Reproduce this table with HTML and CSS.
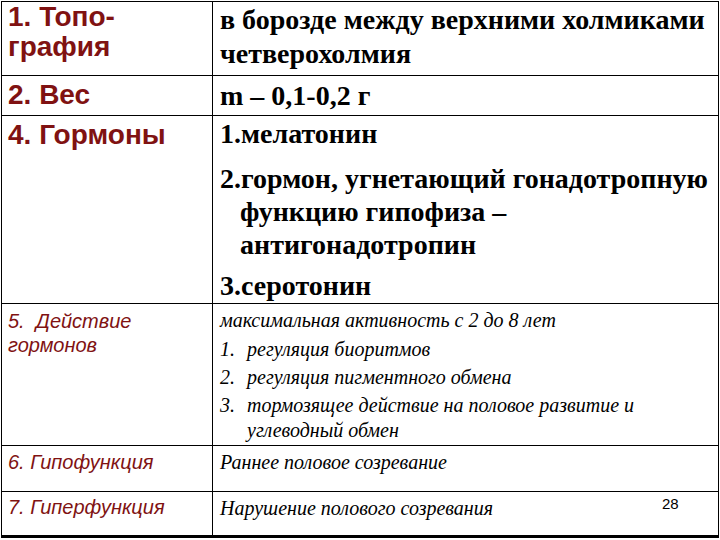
FILE: index.html
```html
<!DOCTYPE html>
<html lang="ru">
<head>
<meta charset="utf-8">
<title>Эпифиз</title>
<link rel="stylesheet" href="styles.css">
</head>
<body>
<div class="slide">
  <div class="grid">
    <div class="cell lbl big r1">1. Топо-<br>графия</div>
    <div class="cell val big r1">в борозде между верхними холмиками четверохолмия</div>

    <div class="cell lbl big r2">2. Вес</div>
    <div class="cell val big r2">m – 0,1-0,2 г</div>

    <div class="cell lbl big r3">4. Гормоны</div>
    <div class="cell val big r3">
      <p class="par p1">1.мелатонин</p>
      <p class="par p2 hang">2.гормон, угнетающий гонадотропную функцию гипофиза –<br>антигонадотропин</p>
      <p class="par p3">3.серотонин</p>
    </div>

    <div class="cell lbl small r4">5.&nbsp; Действие<br>гормонов</div>
    <div class="cell val it r4">
      <div class="line">максимальная активность с 2 до 8 лет</div>
      <ol class="list">
        <li><span class="num">1.</span><span class="txt">регуляция биоритмов</span></li>
        <li><span class="num">2.</span><span class="txt">регуляция пигментного обмена</span></li>
        <li><span class="num">3.</span><span class="txt">тормозящее действие на половое развитие и<br>углеводный обмен</span></li>
      </ol>
    </div>

    <div class="cell lbl small r5">6. Гипофункция</div>
    <div class="cell val it r5">Раннее половое созревание</div>

    <div class="cell lbl small r6">7. Гиперфункция</div>
    <div class="cell val it r6">Нарушение полового созревания</div>
  </div>
  <div class="pagenum">28</div>
</div>
</body>
</html>
```
FILE: styles.css
```css
html, body {
  margin: 0;
  padding: 0;
  background: #ffffff;
}
.slide {
  position: relative;
  width: 720px;
  height: 540px;
  overflow: hidden;
}
.grid {
  margin: 1px 0 0 1px;
  width: 718px;
  box-sizing: border-box;
  display: grid;
  grid-template-columns: 210px 505px;
  grid-template-rows: 73px 39px 187px 141px 45px 43px;
  gap: 1px;
  padding: 1px 1px 3px 1px;
  background: #000;
}
.cell {
  background: #fff;
  overflow: hidden;
}
.lbl {
  padding-left: 6px;
  color: #801212;
  font-family: "Liberation Sans", Arial, sans-serif;
}
.val {
  padding-left: 7px;
  padding-right: 2px;
  color: #000;
  font-family: "Liberation Serif", "Times New Roman", serif;
}

.lbl.big {
  font-size: 28px;
  font-weight: bold;
  line-height: 30px;
  padding-top: 0;
}
.val.big {
  font-size: 28px;
  font-weight: bold;
  line-height: 34px;
  padding-top: 1px;
}
.lbl.big.r2 {
  padding-top: 4px;
}
.val.big.r2 {
  padding-top: 3px;
}
.lbl.big.r3 {
  padding-top: 4px;
}
.val.big.r3 {
  padding-top: 1px;
}
.par {
  margin: 0;
  line-height: 33px;
}
.p1 { margin-bottom: 12px; }
.p2 { margin-bottom: 8px; }
.hang {
  padding-left: 20px;
  text-indent: -20px;
}
.lbl.small {
  font-size: 20px;
  font-style: italic;
  line-height: 24px;
  padding-top: 5px;
}
.val.it {
  font-size: 20px;
  font-style: italic;
  line-height: 25px;
  padding-top: 4px;
}
.lbl.small.r5 { padding-top: 4px; }
.val.it.r5 { padding-top: 4px; }
.lbl.small.r6 { padding-top: 3px; }
.val.it.r6 { padding-top: 4px; }
.line {
  margin-bottom: 4px;
}
.list {
  list-style: none;
  margin: 0;
  padding: 0;
}
.list li {
  display: flex;
  margin-bottom: 3px;
}
.list .num {
  width: 27px;
  flex: none;
}
.list .txt {
  flex: 1;
}
.pagenum {
  position: absolute;
  left: 662px;
  top: 495px;
  font-family: "Liberation Sans", Arial, sans-serif;
  font-size: 15px;
  color: #000;
}
```
